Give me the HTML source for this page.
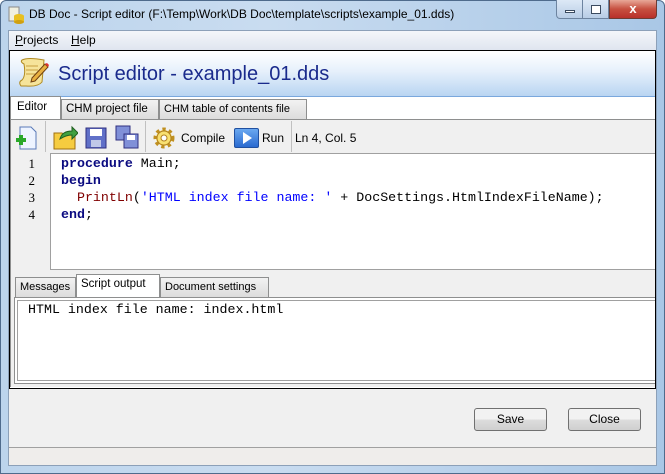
<!DOCTYPE html>
<html><head><style>
*{box-sizing:border-box;margin:0;padding:0}
body{width:665px;height:474px;overflow:hidden;font-family:"Liberation Sans",sans-serif;font-size:12px;background:#fff;position:relative}
.abs{position:absolute;white-space:nowrap}
.mono{font-family:"Liberation Mono",monospace;font-size:13.3px}
.tab{position:absolute;white-space:nowrap;border:1px solid #8e8f8f;border-bottom:none;background:linear-gradient(#f2f2f2,#dcdcdc);font-size:11.5px;padding:3px 4px 0;height:20px;overflow:hidden}
.tab.sel{background:#fff;height:23px}
.btn{position:absolute;width:73px;height:23px;border:1px solid #707070;border-radius:3px;background:linear-gradient(#f2f2f2 50%,#dddddd 50%,#cfcfcf);text-align:center;line-height:21px;font-size:12px}
</style></head><body>
<div class="abs" style="left:0;top:0;width:665px;height:474px;border:1px solid #4f6b8c;border-radius:6px 6px 0 0;background:linear-gradient(90deg,#bcd4ec,#c9dcf0 40%,#a9c7e6)"></div>
<svg class="abs" style="left:7px;top:6px" width="18" height="18"><rect x="2" y="1" width="10" height="14" fill="#f0f0e0" stroke="#8a8a8a"/><ellipse cx="12" cy="10" rx="5" ry="2" fill="#e8c020"/><rect x="7" y="10" width="10" height="6" fill="#e8c020"/><ellipse cx="12" cy="16" rx="5" ry="2" fill="#d0a010"/></svg>
<div class="abs" style="left:29px;top:7px;font-size:12px;color:#000">DB Doc - Script editor (F:\Temp\Work\DB Doc\template\scripts\example_01.dds)</div>
<div class="abs" style="left:556px;top:0;width:27px;height:19px;border:1px solid #6d84a0;border-top:none;border-radius:0 0 0 4px;background:linear-gradient(#dde9f6,#b8cde6)"></div>
<div class="abs" style="left:565px;top:10px;width:10px;height:3px;background:#fff;border:1px solid #3b4b60"></div>
<div class="abs" style="left:583px;top:0;width:26px;height:19px;border:1px solid #6d84a0;border-top:none;border-left:none;background:linear-gradient(#dde9f6,#b8cde6)"></div>
<div class="abs" style="left:591px;top:5px;width:10px;height:9px;border:1px solid #3b4b60;background:#fff"></div>
<div class="abs" style="left:609px;top:0;width:48px;height:19px;border:1px solid #6d3c34;border-top:none;border-radius:0 0 4px 0;background:linear-gradient(#e8a898,#c75040 50%,#b8302a);color:#fff;font-weight:bold;text-align:center;line-height:17px;font-size:13px">x</div>
<div class="abs" style="left:8px;top:30px;width:649px;height:436px;background:#f0f0f0;border:1px solid #8ca0b8"></div>
<div class="abs" style="left:9px;top:31px;width:647px;height:19px;background:linear-gradient(#f4f6fa,#dfe5ef)"></div>
<div class="abs" style="left:15px;top:33px"><u>P</u>rojects</div>
<div class="abs" style="left:71px;top:33px"><u>H</u>elp</div>
<div class="abs" style="left:9px;top:50px;width:647px;height:339px;border:1px solid #000;background:#fff"></div>
<div class="abs" style="left:10px;top:51px;width:645px;height:46px;background:linear-gradient(#fff,#e6f0fb 45%,#b9d5f2);border-bottom:1px solid #7aa8dd"></div>
<svg class="abs" style="left:18px;top:56px" width="32" height="34"><path d="M4 4 Q10 1 26 4 L24 26 Q20 31 8 30 L3 30 Q0 26 4 24 Q8 20 6 8 Q2 6 4 4Z" fill="#f6e49a" stroke="#b08a20"/><path d="M8 10h12M8 14h12M8 18h10" stroke="#c8a040"/><path d="M14 22 L27 8 L30 11 L17 25 L13 26Z" fill="#e8b040" stroke="#704010"/><path d="M27 8 L30 11 L31 9 L29 7Z" fill="#e03030"/></svg>
<div class="abs" style="left:58px;top:63px;font-size:20px;color:#1a2a8c">Script editor - example_01.dds</div>
<div class="tab" style="left:61px;top:99px;width:98px">CHM project file</div>
<div class="tab" style="left:159px;top:99px;width:148px;font-size:11px">CHM table of contents file</div>
<div class="tab sel" style="left:10px;top:96px;width:51px;padding-top:4px;padding-left:6px">Editor</div>
<div class="abs" style="left:10px;top:119px;width:645px;height:268px;border:1px solid #8e8f8f;border-right:none;background:#f0f0f0"></div>
<div class="abs" style="left:11px;top:120px;width:644px;height:33px;background:#f0f0f0"></div>
<svg class="abs" style="left:14px;top:125px" width="26" height="26"><path d="M6 2h11l5 5v17H6Z" fill="#eef4ff" stroke="#5a7ab8"/><path d="M2 15h10M7 10v10" stroke="#2aa82a" stroke-width="4"/></svg>
<div class="abs" style="left:45px;top:121px;width:1px;height:31px;background:#c0c0c0"></div>
<svg class="abs" style="left:52px;top:125px" width="26" height="26"><path d="M2 8h8l2 2h11v14H2Z" fill="#f6cc40" stroke="#a07010"/><path d="M8 14 Q10 6 20 6 L20 2 L26 8 L20 14 L20 10 Q14 10 8 14Z" fill="#40a040" stroke="#206020"/></svg>
<svg class="abs" style="left:84px;top:126px" width="24" height="24"><rect x="2" y="2" width="20" height="20" fill="#6070c8" stroke="#303080"/><rect x="6" y="3" width="12" height="7" fill="#fff"/><rect x="7" y="14" width="10" height="7" fill="#c0c8e8"/></svg>
<svg class="abs" style="left:114px;top:124px" width="26" height="26"><rect x="2" y="2" width="14" height="14" fill="#8090d8" stroke="#303080"/><rect x="10" y="10" width="14" height="14" fill="#8090d8" stroke="#303080"/><rect x="13" y="11" width="8" height="5" fill="#fff"/></svg>
<div class="abs" style="left:145px;top:121px;width:1px;height:31px;background:#c0c0c0"></div>
<svg class="abs" style="left:152px;top:126px" width="24" height="24"><circle cx="12" cy="12" r="8" fill="#f8d860" stroke="#c09020" stroke-width="5" stroke-dasharray="3 3"/><circle cx="12" cy="12" r="7" fill="#f8e070" stroke="#b08020"/><circle cx="12" cy="12" r="3" fill="#fff" stroke="#b08020"/></svg>
<div class="abs" style="left:181px;top:131px">Compile</div>
<div class="abs" style="left:234px;top:128px;width:25px;height:20px;border:1px solid #2050a0;border-radius:2px;background:linear-gradient(#6aa8f0,#2a6ad0)"></div>
<svg class="abs" style="left:234px;top:128px" width="25" height="20"><path d="M9 4 L18 10 L9 16Z" fill="#fff"/></svg>
<div class="abs" style="left:262px;top:131px">Run</div>
<div class="abs" style="left:291px;top:121px;width:1px;height:31px;background:#c0c0c0"></div>
<div class="abs" style="left:295px;top:131px">Ln 4, Col. 5</div>
<div class="abs" style="left:11px;top:153px;width:40px;height:117px;background:#f0f0f0"></div>
<div class="abs" style="left:50px;top:153px;width:605px;height:117px;border:1px solid #a0a0a0;border-right:none;background:#fff"></div>
<div class="abs" style="left:25px;top:155px;line-height:17px;font-family:'Liberation Serif',serif;font-size:13px;color:#000;text-align:right;width:10px">1<br>2<br>3<br>4</div>
<div class="abs mono" style="left:61px;top:155px;line-height:17px;white-space:pre;color:#000"><b style="color:#0a0a80">procedure</b> Main;
<b style="color:#0a0a80">begin</b>
  <span style="color:#800000">PrintLn</span>(<span style="color:#0000ff">'HTML index file name: '</span> + DocSettings.HtmlIndexFileName);
<b style="color:#0a0a80">end</b>;</div>
<div class="abs" style="left:11px;top:270px;width:644px;height:117px;background:#f0f0f0"></div>
<div class="tab" style="left:15px;top:277px;width:61px;font-size:11px">Messages</div>
<div class="tab" style="left:160px;top:277px;width:109px;font-size:11px">Document settings</div>
<div class="tab sel" style="left:76px;top:274px;width:84px;padding-top:3px;font-size:11.5px">Script output</div>
<div class="abs" style="left:14px;top:297px;width:641px;height:87px;border:1px solid #8e8f8f;border-right:none;background:#fff"></div>
<div class="abs" style="left:17px;top:300px;width:638px;height:81px;border:1px solid #a0a0a0;border-right:none;background:#fff"></div>
<div class="abs mono" style="left:28px;top:302px;color:#000">HTML index file name: index.html</div>
<div class="btn" style="left:474px;top:408px">Save</div>
<div class="btn" style="left:568px;top:408px">Close</div>
<div class="abs" style="left:9px;top:447px;width:647px;height:1px;background:#a0a0a0"></div>
<div class="abs" style="left:9px;top:448px;width:647px;height:17px;background:#efedeb"></div>
</body></html>
